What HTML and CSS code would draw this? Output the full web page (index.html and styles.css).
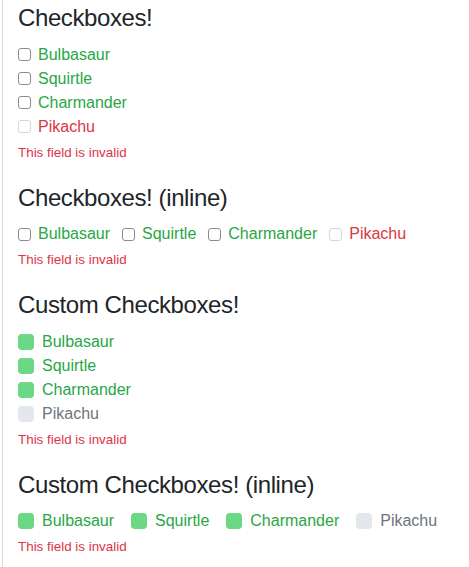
FILE: index.html
```html
<!DOCTYPE html>
<html>
<head>
<meta charset="utf-8">
<link rel="stylesheet" href="styles.css">
</head>
<body>
<div class="page">
  <section class="group">
    <h4 class="title">Checkboxes!</h4>
    <div class="stack">
      <label class="check valid"><input type="checkbox" class="box"><span>Bulbasaur</span></label>
      <label class="check valid"><input type="checkbox" class="box"><span>Squirtle</span></label>
      <label class="check valid"><input type="checkbox" class="box"><span>Charmander</span></label>
      <label class="check invalid"><input type="checkbox" class="box" disabled><span>Pikachu</span></label>
    </div>
    <div class="feedback">This field is invalid</div>
  </section>

  <section class="group">
    <h4 class="title">Checkboxes! (inline)</h4>
    <div class="inline native-inline">
      <label class="check valid"><input type="checkbox" class="box"><span>Bulbasaur</span></label>
      <label class="check valid"><input type="checkbox" class="box"><span>Squirtle</span></label>
      <label class="check valid"><input type="checkbox" class="box"><span>Charmander</span></label>
      <label class="check invalid"><input type="checkbox" class="box" disabled><span>Pikachu</span></label>
    </div>
    <div class="feedback">This field is invalid</div>
  </section>

  <section class="group">
    <h4 class="title">Custom Checkboxes!</h4>
    <div class="stack">
      <label class="custom valid"><span class="cbox on"></span><span>Bulbasaur</span></label>
      <label class="custom valid"><span class="cbox on"></span><span>Squirtle</span></label>
      <label class="custom valid"><span class="cbox on"></span><span>Charmander</span></label>
      <label class="custom muted"><span class="cbox off"></span><span>Pikachu</span></label>
    </div>
    <div class="feedback">This field is invalid</div>
  </section>

  <section class="group">
    <h4 class="title">Custom Checkboxes! (inline)</h4>
    <div class="inline custom-inline">
      <label class="custom valid"><span class="cbox on"></span><span>Bulbasaur</span></label>
      <label class="custom valid"><span class="cbox on"></span><span>Squirtle</span></label>
      <label class="custom valid"><span class="cbox on"></span><span>Charmander</span></label>
      <label class="custom muted"><span class="cbox off"></span><span>Pikachu</span></label>
    </div>
    <div class="feedback">This field is invalid</div>
  </section>
</div>
</body>
</html>
```

FILE: styles.css
```css
html, body {
  margin: 0;
  padding: 0;
  background: #fff;
}
body {
  font-family: "Liberation Sans", Arial, Helvetica, sans-serif;
  font-size: 16px;
  line-height: 1.5;
  color: #212529;
}
.page {
  margin-left: 2px;
  border-left: 1px solid #dcdcdc;
  padding: 4px 0 0 15px;
  min-height: 567px;
  box-sizing: border-box;
}
.group {
  margin-bottom: 21.5px;
}
.title {
  margin: 0 0 10px 0;
  font-size: 24px;
  font-weight: 400;
  line-height: 1.2;
  letter-spacing: -0.4px;
  color: #212529;
}
.stack {
  display: flex;
  flex-direction: column;
}
.inline {
  display: flex;
  flex-direction: row;
  align-items: center;
}
.check {
  display: flex;
  align-items: center;
  height: 24px;
}
.box {
  appearance: none;
  -webkit-appearance: none;
  width: 13px;
  height: 13px;
  margin: 0 7px 0 0;
  border: 1px solid #8c8c8c;
  border-radius: 3px;
  background: #fff;
  box-sizing: border-box;
  flex: none;
}
.box:disabled {
  border-color: #d6d6d6;
}
.native-inline .check {
  margin-right: 12px;
}
.custom {
  display: flex;
  align-items: center;
  height: 24px;
}
.cbox {
  width: 16px;
  height: 16px;
  border-radius: 4px;
  margin-right: 8px;
  flex: none;
}
.cbox.on {
  background: #6ad884;
}
.cbox.off {
  background: #e4e8ec;
}
.custom-inline .custom {
  margin-right: 17px;
}
.valid {
  color: #28a745;
}
.invalid {
  color: #dc3545;
}
.muted {
  color: #6c757d;
}
.feedback {
  margin-top: 4px;
  font-size: 13.4px;
  line-height: 19.2px;
  color: #dc3545;
}
```
